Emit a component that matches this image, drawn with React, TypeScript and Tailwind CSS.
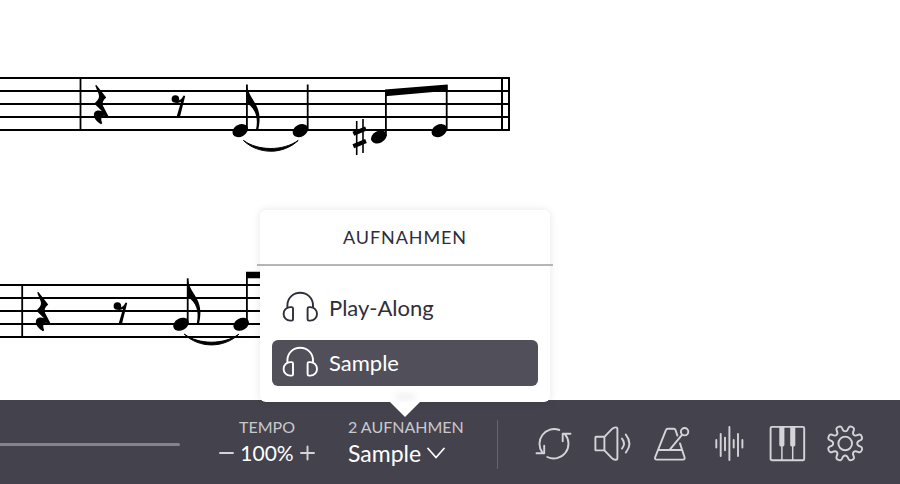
import React, { useState } from 'react';

const recordings = ['Play-Along', 'Sample'];

function Staff({ top, barline }: { top: number; barline: number }) {
  return (
    <g stroke="#000" strokeWidth="1.8">
      {[0, 13, 26, 39, 52].map((dy) => (
        <line key={dy} x1="0" x2="510" y1={top + dy} y2={top + dy} />
      ))}
      <line x1={barline} x2={barline} y1={top} y2={top + 52} />
    </g>
  );
}

function NoteHead({ x, y }: { x: number; y: number }) {
  return <ellipse cx={x} cy={y} rx="8.2" ry="6" transform={`rotate(-28 ${x} ${y})`} />;
}

// quarter rest followed by an eighth rest
function Rests({ x, y }: { x: number; y: number }) {
  return (
    <g transform={`translate(${x} ${y})`}>
      <path d="M0.2 0.6 L1.4 0 L11.2 12.4 C7.6 15.4 6.8 18.4 8.6 22 L13.2 30.8 L12.2 31.6 C7 29 5 32 7.2 38.2 L6 39.2 C1 36.5 -2.8 31 -0.4 27.2 C1 25.2 4.5 25.2 7 26.2 L-0.8 18.6 C4.4 14.4 4.8 11.6 3 7.6 Z" />
      <circle cx="80.4" cy="14" r="3.8" />
      <path d="M81 15.8 C85 16.2 87 13.6 88.6 10.6 L90.2 11 L84.8 32.6 H81.4 L86 16.8 C84.4 18 82.6 18.2 80.4 17.6 Z" />
    </g>
  );
}

function FlaggedNote({ x, y }: { x: number; y: number }) {
  return (
    <g transform={`translate(${x} ${y})`}>
      <NoteHead x={0} y={0} />
      <path d="M5.8 -46 H7.6 V-1 H5.8 Z" />
      <path d="M7 -45 C8.4 -32 19.4 -27 19.4 -12 C19.4 -8 18.8 -4 18 -0.6 L15.8 -1 C18.4 -13 15 -22 7 -27 Z" />
      <path d="M3.2 9.8 C18 24.2 43 24.2 58 9.8 C43 20.6 18 20.6 3.2 9.8 Z" stroke="#000" strokeWidth="1" />
      <NoteHead x={60.2} y={0} />
    </g>
  );
}

function Score() {
  return (
    <svg width="512" height="360" viewBox="0 0 512 360" role="img" aria-label="Notenblatt">
      <Staff top={78} barline={80.5} />
      <Rests x={95} y={85} />
      <FlaggedNote x={240.2} y={130.6} />
      <path d="M306.8 84.5 h1.8 v45 h-1.8 Z" />
      <g stroke="#000">
        <path d="M356.7 121 V155 M363 119 V153" strokeWidth="1.6" />
        <path d="M353.3 133.8 L366 128.4 M353.3 146.2 L366 141" strokeWidth="4.4" />
      </g>
      <NoteHead x={378.8} y={137} />
      <NoteHead x={439.3} y={130.6} />
      <path d="M385 90 h1.8 v46 h-1.8 Z M445.8 85 h1.8 v45 h-1.8 Z" />
      <path d="M385 89.4 L447.5 84.4 V90.8 L385 96.2 Z" />
      <path d="M502 78 V130 M509 77.1 V130.9" stroke="#000" strokeWidth="2" />

      <Staff top={285} barline={22.2} />
      <Rests x={37} y={292} />
      <FlaggedNote x={181} y={324.3} />
      <path d="M246 272 h1.8 v52 h-1.8 Z M246 271.8 h61 v6.4 h-61 Z" />
    </svg>
  );
}

function HeadphonesIcon() {
  return (
    <svg width="36" height="32" viewBox="0 0 36 32" fill="none" stroke="currentColor" strokeWidth="1.9" strokeLinecap="round" strokeLinejoin="round" aria-hidden="true">
      <path d="M5.4 16 V14.4 C5.4 7.2 11 1.8 18.2 1.8 S31 7.2 31 14.4 V16" />
      <path d="M11 17.6 V28.2 Q11 29.6 9.6 29.6 H8.4 C4.4 29.6 1.6 26.6 1.6 22.9 S4.4 16.1 8.4 16.1 H9.6 Q11 16.1 11 17.6 Z" />
      <path d="M25.6 17.6 V28.2 Q25.6 29.6 27 29.6 H28.2 C32.2 29.6 35 26.6 35 22.9 S32.2 16.1 28.2 16.1 H27 Q25.6 16.1 25.6 17.6 Z" />
    </svg>
  );
}

// gear outline: eight teeth, corners smoothed through edge midpoints
function gearPath(cx: number, cy: number) {
  const pts: number[][] = [];
  for (let i = 0; i < 8; i++) {
    const a = 22.5 + i * 45;
    [[-13, 12.2], [-10, 18.2], [10, 18.2], [13, 12.2]].forEach(([da, r]) => {
      const rad = ((a + da) * Math.PI) / 180;
      pts.push([cx + r * Math.cos(rad), cy + r * Math.sin(rad)]);
    });
  }
  const mid = (p: number[], q: number[]) => `${((p[0] + q[0]) / 2).toFixed(2)} ${((p[1] + q[1]) / 2).toFixed(2)}`;
  let d = `M${mid(pts[pts.length - 1], pts[0])}`;
  pts.forEach((p, i) => {
    d += ` Q${p[0].toFixed(2)} ${p[1].toFixed(2)} ${mid(p, pts[(i + 1) % pts.length])}`;
  });
  return d + 'Z';
}

const tools = [
  {
    label: 'Schleife',
    art: (
      <>
        <path d="M22.3 4 A14.7 14.7 0 0 0 5.4 26.6" />
        <path d="M27.9 8.2 A14.7 14.7 0 0 1 10.3 31" />
        <path d="M33.5 7.7 H25.7 V15.3 M-0.5 27.3 H7.2 V19.7" />
      </>
    ),
  },
  {
    label: 'Lautstärke',
    art: (
      <>
        <rect x="0.4" y="10.8" width="9" height="13.6" rx="0.6" />
        <path d="M9.4 10.8 L16.6 3.4 Q18.6 1.4 20.6 1.4 H21 Q22.4 1.4 22.4 2.8 V32.4 Q22.4 33.8 21 33.8 H20.6 Q18.6 33.8 16.6 31.8 L9.4 24.4" />
        <path d="M27 12.6 Q31 17.6 27 22.6 M30.8 8.6 Q38 17.6 30.8 26.6" />
      </>
    ),
  },
  {
    label: 'Metronom',
    art: (
      <>
        <path d="M24.4 9.6 L22.4 3.8 Q22 2.7 20.9 2.7 H14.6 Q13.4 2.7 13 3.8 L2.2 31.2 Q1.4 33.6 3.8 33.6 H30 Q32.2 33.6 31.5 31.2 L27 17.4 M5.2 24 H29" />
        <path d="M16.8 23.6 L29 8.8" />
        <circle cx="31.6" cy="5.7" r="3.7" />
      </>
    ),
  },
  {
    label: 'Wellenform',
    art: <path d="M5.3 14 V21.6 M9.7 8 V30 M14 11.6 V24.2 M18.4 1 V34 M22.7 14 V21.6 M27 8 V30 M31.4 14 V21.6" />,
  },
  {
    label: 'Klavier',
    art: (
      <>
        <rect x="1.6" y="0.9" width="33.6" height="33.4" rx="1.4" />
        <path d="M10.3 1 H15.4 V19 Q15.4 20.4 14 20.4 H11.7 Q10.3 20.4 10.3 19 Z M21.2 1 H26.3 V19 Q26.3 20.4 24.9 20.4 H22.6 Q21.2 20.4 21.2 19 Z" fill="currentColor" stroke="none" />
        <path d="M12.9 20 V34 M23.7 20 V34" strokeWidth="1.5" />
      </>
    ),
  },
  {
    label: 'Einstellungen',
    art: (
      <>
        <path d={gearPath(18.2, 17.4)} />
        <circle cx="18.2" cy="17.4" r="6.8" />
      </>
    ),
  },
];

export default function App() {
  const [selected, setSelected] = useState('Sample');
  const [open, setOpen] = useState(true);
  const [tempo, setTempo] = useState(100);

  return (
    <div className="flex min-h-screen flex-col overflow-hidden bg-white font-['Lato',sans-serif]">
      <main className="flex-1">
        <Score />
      </main>

      <footer className="flex h-[84px] items-center bg-[#44434d] pt-1 text-white">
        <input
          type="range"
          aria-label="Position"
          defaultValue={0}
          className="h-[3px] min-w-0 flex-1 appearance-none rounded-r-full bg-[#85848b] [&::-webkit-slider-thumb]:appearance-none"
        />

        <div className="ml-[39px] w-24 pb-2">
          <div className="text-center text-base leading-[26px] text-[#c9c9cd]">TEMPO</div>
          <div className="flex items-center justify-between leading-[26px]">
            <button type="button" aria-label="Langsamer" onClick={() => setTempo(tempo - 5)}>
              <svg width="15" height="16" viewBox="0 0 15 16" stroke="#d4d4d8" strokeWidth="1.9" strokeLinecap="round">
                <path d="M1 8 H14" />
              </svg>
            </button>
            <span className="text-[21px]">{tempo}%</span>
            <button type="button" aria-label="Schneller" onClick={() => setTempo(tempo + 5)}>
              <svg width="15" height="16" viewBox="0 0 15 16" stroke="#d4d4d8" strokeWidth="1.9" strokeLinecap="round">
                <path d="M1 8 H14 M7.5 1.5 V14.5" />
              </svg>
            </button>
          </div>
        </div>

        <div className="relative ml-[33px] w-[114px] pb-2">
          <div className="text-base leading-[26px] whitespace-nowrap text-[#c9c9cd]">2 AUFNAHMEN</div>
          <button
            type="button"
            aria-haspopup="listbox"
            aria-expanded={open}
            onClick={() => setOpen(!open)}
            className="flex items-center gap-1.5 text-[23px] leading-[26px]"
          >
            {selected}
            <svg width="18" height="12" viewBox="0 0 18 12" fill="none" stroke="currentColor" strokeWidth="1.7" strokeLinecap="round" aria-hidden="true">
              <path d="M1 1.5 L9 10.5 L17 1.5" />
            </svg>
          </button>

          {open && (
            <div className="absolute bottom-full left-1/2 mb-3 w-[290px] -translate-x-1/2 rounded-md bg-white text-[#2f2e3a] shadow-[0_0_8px_rgba(0,0,0,0.1)]">
              <h2 className="-mx-[3px] border-b-2 border-[#b5b5b8] text-center text-lg leading-[54px] tracking-wider">AUFNAHMEN</h2>
              <div role="listbox" aria-label="Aufnahmen" className="flex flex-col gap-[9px] px-3 pt-[19px] pb-4">
                {recordings.map((name) => (
                  <button
                    key={name}
                    type="button"
                    role="option"
                    aria-selected={name === selected}
                    onClick={() => setSelected(name)}
                    className={`flex h-[46px] items-center gap-[11px] rounded-md px-2.5 pb-0.5 text-[22px] ${
                      name === selected ? 'bg-[#504f5a] text-white' : ''
                    }`}
                  >
                    <HeadphonesIcon />
                    {name}
                  </button>
                ))}
              </div>
              <div className="absolute bottom-0.5 left-1/2 h-1.5 w-5 -translate-x-1/2 bg-black/6 blur-[3px]" />
              <svg width="30" height="15" viewBox="0 0 30 15" className="absolute top-full left-1/2 -translate-x-1/2" aria-hidden="true">
                <path d="M0 0 H30 L15 15 Z" fill="#fff" />
              </svg>
            </div>
          )}
        </div>

        <div className="ml-[35px] h-[49px] w-px bg-[#67666f]" />

        <div className="mr-[37px] ml-[39px] flex gap-[22px] text-[#d4d4d8]">
          {tools.map((tool) => (
            <button key={tool.label} type="button" aria-label={tool.label}>
              <svg width="36" height="36" viewBox="0 0 36 36" fill="none" stroke="currentColor" strokeWidth="1.9" strokeLinecap="round" strokeLinejoin="round" className="overflow-visible">
                {tool.art}
              </svg>
            </button>
          ))}
        </div>
      </footer>
    </div>
  );
}
